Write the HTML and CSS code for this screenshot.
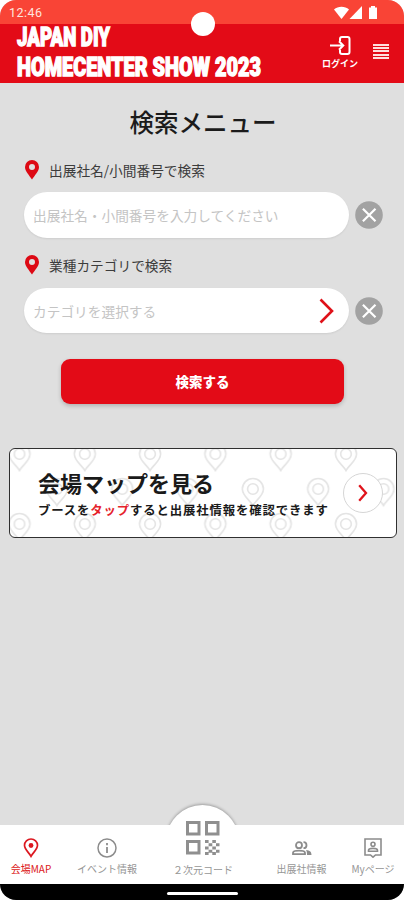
FILE: index.html
```
<!DOCTYPE html>
<html lang="ja">
<head>
  <meta charset="UTF-8" />
  <meta name="viewport" content="width=device-width, initial-scale=1" />
  <title>JAPAN DIY HOMECENTER SHOW 2023</title>
  <link rel="stylesheet" href="styles.css">
</head>
<body>
  <svg width="0" height="0" class="defs">
    <symbol id="pin" viewBox="0 0 14 20">
      <path fill-rule="evenodd" d="M7 0a7 7 0 0 0-7 7c0 4.600 4.300 8.200 7 12.500C9.700 15.200 14 11.600 14 7a7 7 0 0 0-7-7zm0 3.900a3 3 0 1 1 0 6 3 3 0 0 1 0-6z" />
    </symbol>
    <symbol id="clear" viewBox="0 0 28 28">
      <circle cx="14" cy="14" r="13.800" fill="#a2a2a2" />
      <path d="M7.900 7.800l12.600 12.400M20.500 7.800L7.900 20.200" stroke="#fff" stroke-width="2.200" />
    </symbol>
  </svg>

  <div class="screen">
    <!-- ステータスバー -->
    <div class="status-bar">
      <span class="time">12:46</span>
      <svg class="status-icons" width="46" height="14" viewBox="0 0 46 14" fill="#fff">
        <path d="M0 3.500C4-.2 11-.2 15 3.500L7.500 13z" />
        <path d="M28 0v13H15.500z" />
        <path d="M37 0h4v1.500h2V13h-8V1.500h2z" />
      </svg>
      <div class="camera"></div>
    </div>

    <!-- ヘッダー -->
    <header class="header">
      <svg class="logo" width="250" height="58" viewBox="0 0 250 58">
        <text x="1" y="22" textLength="93" lengthAdjust="spacingAndGlyphs">JAPAN DIY</text>
        <text x="1" y="51.500" textLength="244" lengthAdjust="spacingAndGlyphs">HOMECENTER SHOW 2023</text>
      </svg>
      <div class="login">
        <svg width="21" height="19" viewBox="0 0 21 19" fill="none" stroke="#fff" stroke-width="2">
          <path d="M10 5V3Q10 1 12 1h5.500q2 0 2 2v13q0 2-2 2H12q-2 0-2-2v-2M0 9.500h13M9 5.200l4.300 4.300L9 13.800" />
        </svg>
        <span>ログイン</span>
      </div>
      <div class="menu"><i></i><i></i><i></i><i></i><i></i></div>
    </header>

    <!-- 検索フォーム -->
    <main class="main">
      <h1>検索メニュー</h1>

      <div class="label"><svg width="14" height="20"><use href="#pin" /></svg><span>出展社名/小間番号で検索</span></div>
      <div class="row">
        <div class="field"><span class="name-hint">出展社名・小間番号を入力してください</span></div>
        <svg width="28" height="28"><use href="#clear" /></svg>
      </div>

      <div class="label second"><svg width="14" height="20"><use href="#pin" /></svg><span>業種カテゴリで検索</span></div>
      <div class="row">
        <div class="field">
          <span>カテゴリを選択する</span>
          <svg width="15" height="26" viewBox="0 0 15 26" fill="none" stroke="#df1119" stroke-width="2.600">
            <path d="M1.500 1.500l11.500 11.500L1.500 24.500" />
          </svg>
        </div>
        <svg width="28" height="28"><use href="#clear" /></svg>
      </div>

      <div class="search-button">検索する</div>

      <!-- 会場マップ -->
      <div class="map-card">
        <svg class="map-pattern" width="386" height="88">
          <defs>
            <pattern id="pins" x="9.500" y="5" width="65.300" height="70" patternUnits="userSpaceOnUse">
              <g id="p" fill="none" stroke="#e4e4e4" stroke-width="1.600">
                <path d="M0 16.500C-3 11-10.500 7-10.500 0A10.500 10.500 0 0 1 10.500 0C10.500 7 3 11 0 16.500z" />
                <circle r="5.300" />
              </g>
              <use href="#p" x="65.300" />
              <use href="#p" y="70" />
              <use href="#p" x="65.300" y="70" />
              <use href="#p" x="37.500" y="35" />
            </pattern>
          </defs>
          <rect width="386" height="88" fill="url(#pins)" />
        </svg>
        <div class="map-text">
          <h2>会場マップを見る</h2>
          <p>ブースを<em>タップ</em>すると出展社情報を確認できます</p>
        </div>
        <div class="map-go">
          <svg width="10" height="18" viewBox="0 0 10 18" fill="none" stroke="#e0141c" stroke-width="2.300">
            <path d="M1.200 1.200L8 9l-6.800 7.800" />
          </svg>
        </div>
      </div>
    </main>

    <!-- 下部ナビ -->
    <nav class="nav">
      <div class="bump"></div>
      <div class="item map active">
        <svg width="16" height="20" viewBox="0 0 16 20" fill="none" stroke="#dc1820" stroke-width="1.700">
          <path d="M8 18.300C6 14.500 1.500 11.500 1.500 7.300a6.500 6.300 0 0 1 13 0C14.500 11.500 10 14.500 8 18.300z" />
          <circle cx="8" cy="7.500" r="2.400" fill="#dc1820" stroke="none" />
        </svg>
        <span>会場MAP</span>
      </div>
      <div class="item event">
        <svg width="20" height="20" viewBox="0 0 20 20" fill="none" stroke="#8c8c8c" stroke-width="1.500">
          <circle cx="10" cy="10" r="9" />
          <path d="M10 9v6M10 5v2.200" stroke-width="1.800" />
        </svg>
        <span>イベント情報</span>
      </div>
      <div class="item code">
        <svg width="34" height="34" viewBox="0 0 34 34" fill="none" stroke="#8f8f8f" stroke-width="3">
          <path d="M1.500 1.500h11.500V13H1.500zM20.500 1.500H32V13H20.500zM1.500 20.500H13V32H1.500z" />
          <path d="M19 20.500h3.600M26.300 20.500h3.600M22.600 23.800h3.700M30 23.800h3.500M19 27h3.600M26.300 27h3.600M22.600 30.200h3.700M30 30.200h3.500M19 32.500h3.600M26.300 32.500h3.600" />
        </svg>
        <span>２次元コード</span>
      </div>
      <div class="item exhibitor">
        <svg width="20" height="15" viewBox="0 0 20 15" fill="none" stroke="#8c8c8c" stroke-width="1.800">
          <circle cx="7" cy="4.200" r="3" />
          <path d="M1 13.200v-1.500c0-2.700 12-2.700 12 0v1.500zM11.500 1.200c4 0 4 6 0 6" />
          <path d="M14 9c4 .4 5.500 1.800 5.500 5H15c0-2.500-.2-3.800-1-5z" fill="#8c8c8c" stroke="none" />
        </svg>
        <span>出展社情報</span>
      </div>
      <div class="item mypage">
        <svg width="18" height="20" viewBox="0 0 18 20" fill="none" stroke="#8c8c8c" stroke-width="1.600">
          <path d="M1 1h16v16h-5.500L9 19.200 6.500 17H1z" />
          <circle cx="9" cy="6.200" r="2" />
          <path d="M4.500 13.300v-1c0-2.600 9-2.600 9 0v1z" />
        </svg>
        <span>Myページ</span>
      </div>
    </nav>

    <div class="system-bar"><i></i></div>
  </div>
</body>
</html>
```
FILE: styles.css
```
* {
  box-sizing: border-box;
}

body {
  margin: 0;
  background: #fff;
  font-family: "Noto Sans CJK JP", sans-serif;
}

.defs {
  position: absolute;
}

.screen {
  width: 404px;
  height: 900px;
  display: flex;
  flex-direction: column;
  background: #dfdfdf;
  border-radius: 16px;
  overflow: hidden;
}

svg {
  display: block;
  flex: none;
}

/* ステータスバー */
.status-bar {
  position: relative;
  height: 24px;
  flex: none;
  display: flex;
  justify-content: space-between;
  padding: 5px 24px 0 9px;
  background: #f94436;
  color: #ffe5df;
}

.time {
  font: 12.5px/16px Roboto, sans-serif;
  letter-spacing: 0.5px;
}

.status-icons {
  margin-top: 1px;
}

.camera {
  position: absolute;
  left: 191px;
  top: 12px;
  width: 24px;
  height: 24px;
  border-radius: 50%;
  background: #fff;
}

/* ヘッダー */
.header {
  height: 59px;
  flex: none;
  display: flex;
  padding: 0 15px 0 16px;
  background: #e30b17;
}

.logo {
  overflow: visible;
}

.logo text {
  font: 900 25.5px Roboto, sans-serif;
  fill: #fff;
  stroke: #fff;
  stroke-width: 1.4px;
}

.login {
  width: 40px;
  margin: 12px 0 0 54px;
  display: flex;
  flex-direction: column;
  align-items: center;
}

.login span {
  margin-top: 2px;
  font-size: 9px;
  line-height: 13px;
  font-weight: 700;
  color: #fff;
  white-space: nowrap;
}

.menu {
  width: 16px;
  margin: 20px 0 0 13px;
  display: flex;
  flex-direction: column;
  gap: 1.2px;
}

.menu i {
  height: 2px;
  background: #ffdede;
}

/* 検索 */
.main {
  flex: 1;
  padding: 20px 7px 0 9px;
}

h1 {
  margin: 0;
  font-size: 24.5px;
  line-height: 38px;
  font-weight: 500;
  text-align: center;
  color: #1b1b1b;
}

.label {
  display: flex;
  align-items: center;
  gap: 10px;
  height: 20px;
  margin: 19px 0 12px 16px;
  font-size: 13.7px;
  color: #3c3c3c;
}

.label svg {
  fill: #dd0914;
}

.label.second {
  margin: 17px 0 13px 16px;
}

.row {
  display: flex;
  align-items: center;
  gap: 6px;
  margin-left: 15px;
}

.field {
  width: 325px;
  height: 46px;
  display: flex;
  align-items: center;
  justify-content: space-between;
  padding: 0 15px 0 9px;
  border-radius: 23px;
  background: #fff;
  box-shadow: 0 1px 2px rgba(0, 0, 0, 0.08);
  font-size: 13.700px;
  color: #c4c4c4;
}

.second + .row .field {
  height: 45px;
}

.search-button {
  width: 283px;
  height: 45px;
  margin: 26px 0 0 52px;
  border-radius: 9px;
  background: #e30b17;
  box-shadow: 0 2px 4px rgba(0, 0, 0, 0.2);
  color: #fff;
  font-size: 13.500px;
  font-weight: 900;
  line-height: 45px;
  text-align: center;
}

/* 会場マップ */
.map-card {
  position: relative;
  height: 90px;
  margin-top: 44px;
  display: flex;
  align-items: center;
  justify-content: space-between;
  padding: 0 13px 0 28px;
  border: 1.500px solid #303030;
  border-radius: 6px;
  background: #fff;
  overflow: hidden;
}

.map-pattern {
  position: absolute;
  left: 0;
  top: 0;
}

.map-text {
  position: relative;
  white-space: nowrap;
  color: #1a1a1a;
}

h2 {
  margin: 0;
  font-size: 22px;
  line-height: 31px;
  font-weight: 700;
}

p {
  margin: 3px 0 0;
  font-size: 12.400px;
  line-height: 18px;
  font-weight: 700;
  letter-spacing: 0.85px;
}

p em {
  font-style: normal;
  color: #e5222b;
}

.map-go {
  position: relative;
  width: 40px;
  height: 40px;
  flex: none;
  display: flex;
  align-items: center;
  justify-content: center;
  border: 1.500px solid #d5d5d5;
  border-radius: 50%;
  background: #fff;
}

/* 下部ナビ */
.nav {
  position: relative;
  height: 59px;
  flex: none;
  display: flex;
  background: #fff;
}

.bump {
  position: absolute;
  left: 166px;
  top: -20px;
  width: 73px;
  height: 73px;
  border-radius: 50%;
  background: #fff;
  box-shadow: 0 -1px 3px rgba(0, 0, 0, 0.3);
  clip-path: inset(-6px -6px 53px -6px);
}

.item {
  position: relative;
  display: flex;
  flex-direction: column;
  align-items: center;
  justify-content: flex-end;
  padding-bottom: 8px;
  font-size: 10px;
  line-height: 14px;
  color: #969696;
  white-space: nowrap;
}

.item span {
  margin-top: 4px;
}

.map {
  width: 62px;
}

.event {
  width: 90px;
}

.code {
  width: 102px;
  padding-bottom: 7px;
}

.code span {
  margin-top: 8px;
}

.exhibitor {
  width: 95px;
}

.exhibitor span {
  margin-top: 6px;
}

.mypage {
  width: 48px;
}

.active {
  color: #dc1820;
}

.system-bar {
  height: 16px;
  flex: none;
  display: flex;
  justify-content: center;
  padding-top: 8px;
  background: #000;
}

.system-bar i {
  width: 71px;
  height: 3px;
  border-radius: 2px;
  background: #fff;
}
```
